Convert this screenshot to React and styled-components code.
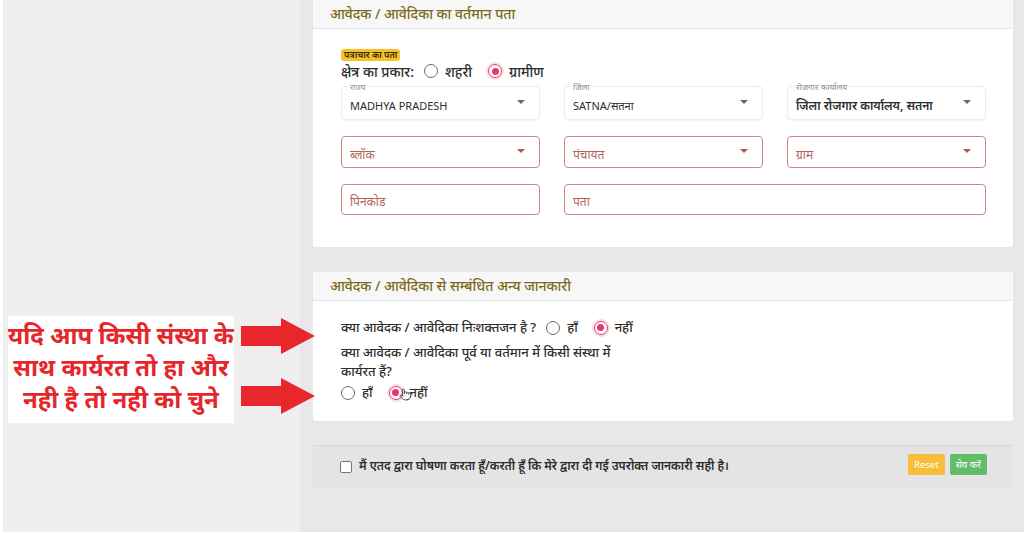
import React from "react";
import styled, { createGlobalStyle } from "styled-components";
import { Pointer } from "lucide-react";

const GlobalStyle = createGlobalStyle`
  html, body {
    margin: 0;
    padding: 0;
    background: #efefef;
  }
  * {
    box-sizing: border-box;
  }
`;

const FONT = `"Noto Sans", "Lato", "Liberation Sans", sans-serif`;

const Page = styled.div`
  display: flex;
  height: 534px;
  overflow: hidden;
  background: #efefef;
  border-left: 3px solid #fff;
  border-bottom: 2px solid #fff;
  font-family: ${FONT};
  line-height: 1.2;
`;

const Side = styled.div`
  position: relative;
  z-index: 1;
  width: 297px;
  flex-shrink: 0;
  display: flex;
  align-items: flex-start;
  gap: 7px;
  padding: 316px 0 0 5px;
`;

const Note = styled.div`
  width: 228px;
  height: 107px;
  background: #fff;
  color: #e5262b;
  font-weight: 700;
  font-size: 24px;
  line-height: 32px;
  text-align: center;
  padding-top: 3px;
  white-space: nowrap;
`;

const Arrows = styled.div`
  display: flex;
  flex-direction: column;
  gap: 24px;
  margin-top: 2px;
`;

const Main = styled.div`
  flex: 1;
  background: #e8e8e8;
  padding: 0 11px 0 13px;
  display: flex;
  flex-direction: column;
`;

const Card = styled.section`
  background: #fff;
  border-radius: 0 0 3px 3px;
  margin-bottom: ${(p) => p.$gap || 0}px;
`;

const CardHeader = styled.div`
  height: 29px;
  background: #f7f7f7;
  border-bottom: 1px solid #e6e6e6;
  display: flex;
  align-items: center;
  padding-left: 17px;
  font-size: 14px;
  font-weight: 500;
  color: #7b6a18;
`;

const CardBody = styled.div`
  padding: ${(p) => p.$pad};
`;

const Badge = styled.span`
  display: block;
  width: fit-content;
  background: #f6c22b;
  color: #3a2c00;
  font-size: 9px;
  font-weight: 600;
  line-height: 12px;
  height: 12px;
  padding: 0 3px;
  border-radius: 3px;
`;

const RadioLine = styled.div`
  display: flex;
  align-items: center;
  flex-wrap: wrap;
  column-gap: 8px;
  font-size: ${(p) => p.$size || 13}px;
  font-weight: 500;
  color: #2d2d2d;
  line-height: 19px;
  min-height: ${(p) => (p.$size ? 20 : 19)}px;
  margin: ${(p) => p.$margin || 0};
`;

const Question = styled.span`
  max-width: ${(p) => (p.$wrap ? "300px" : "none")};
  margin-right: ${(p) => (p.$wrap ? 0 : 2)}px;
`;

const Option = styled.label`
  position: relative;
  display: inline-flex;
  align-items: center;
  gap: 7px;
  margin-right: 8px;
`;

const Radio = styled.span`
  width: 14px;
  height: 14px;
  border-radius: 50%;
  border: 1.5px solid ${(p) => (p.$on ? "#e23a6c" : "#6a6a6a")};
  display: inline-flex;
  align-items: center;
  justify-content: center;
  box-shadow: ${(p) => (p.$on ? "0 0 0 2px rgba(226, 58, 108, 0.18)" : "none")};
  &::after {
    content: "";
    width: 7px;
    height: 7px;
    border-radius: 50%;
    background: ${(p) => (p.$on ? "#e23a6c" : "transparent")};
  }
`;

const Cursor = styled.span`
  position: absolute;
  left: 10px;
  top: 5px;
  color: #444;
  display: flex;
`;

const Grid = styled.div`
  display: grid;
  grid-template-columns: repeat(3, 1fr);
  grid-template-rows: 34px 32px 31px;
  column-gap: 24px;
  row-gap: 16px;
  margin-top: 5px;
`;

const Field = styled.div`
  position: relative;
  grid-column: ${(p) => (p.$wide ? "span 2" : "auto")};
  border: ${(p) => (p.$error ? "1.5px solid #cf857d" : "1px solid #ececec")};
  border-radius: 4px;
  box-shadow: ${(p) => (p.$error ? "none" : "0 1px 2px rgba(0,0,0,0.05)")};
  display: flex;
  align-items: center;
  padding: 6px 14px 0 8px;
`;

const FloatLabel = styled.span`
  position: absolute;
  top: -5px;
  left: 6px;
  padding: 0 2px;
  background: #fff;
  font-size: 8.5px;
  line-height: 10px;
  color: #8a8a8a;
`;

const Value = styled.span`
  flex: 1;
  font-size: ${(p) => (p.$hindi ? 12 : 11)}px;
  font-weight: ${(p) => (p.$bold ? 600 : 400)};
  color: ${(p) => (p.$placeholder ? "#b5625a" : "#2e2e2e")};
  white-space: nowrap;
`;

const Caret = styled.span`
  width: 0;
  height: 0;
  border-left: 4px solid transparent;
  border-right: 4px solid transparent;
  border-top: 4px solid ${(p) => (p.$error ? "#c0524b" : "#666")};
  margin-top: -8px;
`;

const Footer = styled.div`
  margin-top: 24px;
  height: 42px;
  background: #e4e4e4;
  border-top: 1px solid #d8d8d8;
  border-radius: 0 0 3px 3px;
  display: flex;
  align-items: center;
  padding: 0 26px 0 27px;
  font-size: 12px;
  font-weight: 600;
  color: #2d2d2d;
`;

const Check = styled.span`
  width: 12px;
  height: 12px;
  border: 1px solid #777;
  border-radius: 2px;
  background: #fff;
  margin-right: 7px;
  flex-shrink: 0;
`;

const Declaration = styled.span`
  flex: 1;
  white-space: nowrap;
`;

const Button = styled.button`
  height: 21px;
  padding: 0 6px;
  margin-left: 5px;
  border: none;
  border-radius: 2px;
  background: ${(p) => p.$bg};
  color: #fff;
  font-family: ${FONT};
  font-size: 9.5px;
  font-weight: 400;
  margin-top: -4px;
`;

const Arrow = () => (
  <svg width="74" height="36" viewBox="0 0 74 36">
    <polygon points="0,8 40,8 40,0 74,18 40,36 40,28 0,28" fill="#e8262b" />
  </svg>
);

const SelectField = ({ label, value, bold, hindi, error, placeholder }) => (
  <Field $error={error}>
    {label && <FloatLabel>{label}</FloatLabel>}
    <Value $bold={bold} $hindi={hindi} $placeholder={placeholder}>
      {value}
    </Value>
    <Caret $error={error} />
  </Field>
);

const TextField = ({ value, wide }) => (
  <Field $error $wide={wide}>
    <Value $hindi $placeholder>
      {value}
    </Value>
  </Field>
);

const Choice = ({ on, children, cursor }) => (
  <Option>
    <Radio $on={on} />
    {children}
    {cursor && (
      <Cursor>
        <Pointer size={13} strokeWidth={1.6} />
      </Cursor>
    )}
  </Option>
);

export default function App() {
  return (
    <>
      <GlobalStyle />
      <Page>
        <Side>
          <Note>
            यदि आप किसी संस्था के
            <br />
            साथ कार्यरत तो हा और
            <br />
            नही है तो नही को चुने
          </Note>
          <Arrows>
            <Arrow />
            <Arrow />
          </Arrows>
        </Side>
        <Main>
          <Card $gap={25}>
            <CardHeader>आवेदक / आवेदिका का वर्तमान पता</CardHeader>
            <CardBody $pad="20px 27px 32px 28px">
              <Badge>पत्राचार का पता</Badge>
              <RadioLine $size={14}>
                <Question>क्षेत्र का प्रकार:</Question>
                <Choice>शहरी</Choice>
                <Choice on>ग्रामीण</Choice>
              </RadioLine>
              <Grid>
                <SelectField label="राज्य" value="MADHYA PRADESH" />
                <SelectField label="जिला" value="SATNA/सतना" />
                <SelectField
                  label="रोजगार कार्यालय"
                  value="जिला रोजगार कार्यालय, सतना"
                  bold
                  hindi
                />
                <SelectField value="ब्लॉक" hindi error placeholder />
                <SelectField value="पंचायत" hindi error placeholder />
                <SelectField value="ग्राम" hindi error placeholder />
                <TextField value="पिनकोड" />
                <TextField value="पता" wide />
              </Grid>
            </CardBody>
          </Card>
          <Card>
            <CardHeader>आवेदक / आवेदिका से सम्बंधित अन्य जानकारी</CardHeader>
            <CardBody $pad="17px 27px 19px 28px">
              <RadioLine $margin="0 0 6px">
                <Question>क्या आवेदक / आवेदिका निःशक्तजन है ?</Question>
                <Choice>हाँ</Choice>
                <Choice on>नहीं</Choice>
              </RadioLine>
              <RadioLine $margin="0 0 2px">
                <Question $wrap>
                  क्या आवेदक / आवेदिका पूर्व या वर्तमान में किसी संस्था में
                  कार्यरत हैं?
                </Question>
              </RadioLine>
              <RadioLine>
                <Choice>हाँ</Choice>
                <Choice on cursor>
                  नहीं
                </Choice>
              </RadioLine>
            </CardBody>
          </Card>
          <Footer>
            <Check />
            <Declaration>
              मैं एतद द्वारा घोषणा करता हूँ/करती हूँ कि मेरे द्वारा दी गई उपरोक्त
              जानकारी सही है।
            </Declaration>
            <Button $bg="#f8be3a">Reset</Button>
            <Button $bg="#62bd6b">सेव करें</Button>
          </Footer>
        </Main>
      </Page>
    </>
  );
}
